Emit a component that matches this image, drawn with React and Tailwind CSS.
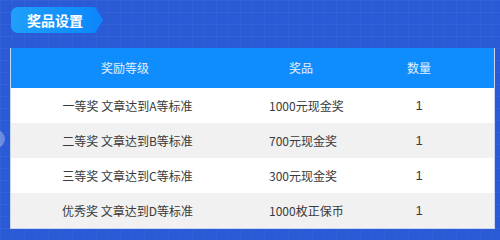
import React from 'react';

const rows = [
  { level: '一等奖 文章达到A等标准', prize: '1000元现金奖', count: 1 },
  { level: '二等奖 文章达到B等标准', prize: '700元现金奖', count: 1 },
  { level: '三等奖 文章达到C等标准', prize: '300元现金奖', count: 1 },
  { level: '优秀奖 文章达到D等标准', prize: '1000枚正保币', count: 1 },
];

export default function App() {
  return (
    <div
      className="relative w-[500px] h-[240px] overflow-hidden bg-[#2b5ad6] bg-[linear-gradient(rgba(255,255,255,0.035)_1px,transparent_1px),linear-gradient(90deg,rgba(255,255,255,0.035)_1px,transparent_1px)] bg-[size:12px_12px] pt-[7px] font-['Noto_Sans_CJK_SC','Noto_Sans',sans-serif]"
    >
      {/* side arrow peeking in */}
      <div className="absolute left-[-13px] top-[130px] w-[18px] h-[18px] rounded-full bg-white/30" />

      {/* section tab */}
      <div className="ml-[11px] flex h-[26px] w-[92px] items-center">
        <div className="flex h-full flex-1 items-center rounded-l-[7px] bg-[linear-gradient(90deg,#20a0fb,#0c88fb)] pl-[16px] text-[14px] font-bold leading-none text-white">
          奖品设置
        </div>
        <div className="h-full w-[8px] bg-[#0c88fb] [clip-path:polygon(0_0,100%_50%,0_100%)]" />
      </div>

      {/* table */}
      <div className="ml-[10px] mt-[15px] w-[485px] border border-[#c9d6f2] border-t-0 bg-white">
        <div className="grid h-[40px] grid-cols-[228px_124px_112px] items-center bg-[#0f8dfd] text-[12px] text-[#e4efff]">
          <div className="text-center">奖励等级</div>
          <div className="text-center">奖品</div>
          <div className="text-center">数量</div>
        </div>
        {rows.map((r, i) => (
          <div
            key={i}
            className={`grid h-[35px] grid-cols-[228px_124px_112px] items-center text-[12px] text-[#3a3a3a] ${
              i % 2 === 1 ? 'bg-[#f1f1f1]' : 'bg-white'
            }`}
          >
            <div className="pl-[5px] text-center">{r.level}</div>
            <div className="pl-[30px]">{r.prize}</div>
            <div className="text-center font-['Liberation_Sans',sans-serif] text-[13px]">{r.count}</div>
          </div>
        ))}
      </div>
    </div>
  );
}
